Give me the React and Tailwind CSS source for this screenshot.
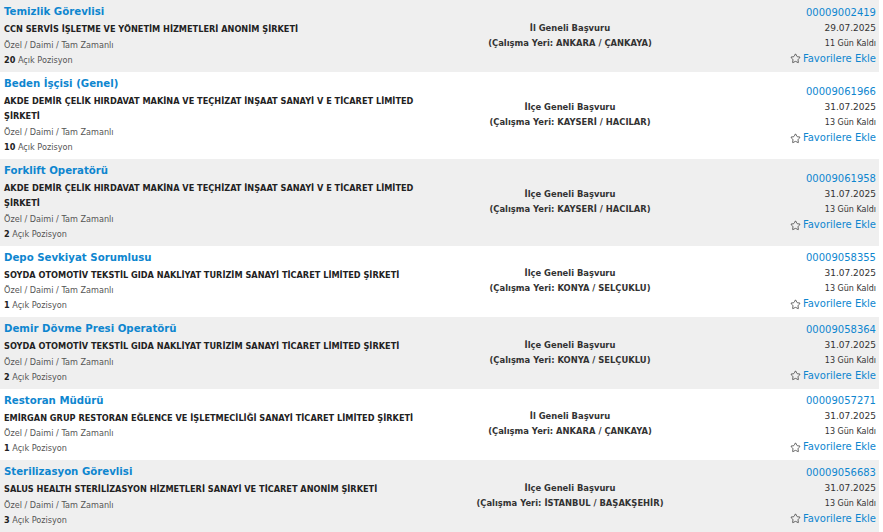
import { Star } from "lucide-react";

const jobs = [
  {
    title: "Temizlik Görevlisi",
    company: "CCN SERVİS İŞLETME VE YÖNETİM HİZMETLERİ ANONİM ŞİRKETİ",
    count: 20,
    scope: "İl Geneli Başvuru",
    place: "ANKARA / ÇANKAYA",
    no: "00009002419",
    date: "29.07.2025",
    left: "11 Gün Kaldı",
  },
  {
    title: "Beden İşçisi (Genel)",
    company: "AKDE DEMİR ÇELİK HIRDAVAT MAKİNA VE TEÇHİZAT İNŞAAT SANAYİ V E TİCARET LİMİTED ŞİRKETİ",
    count: 10,
    scope: "İlçe Geneli Başvuru",
    place: "KAYSERİ / HACILAR",
    no: "00009061966",
    date: "31.07.2025",
    left: "13 Gün Kaldı",
  },
  {
    title: "Forklift Operatörü",
    company: "AKDE DEMİR ÇELİK HIRDAVAT MAKİNA VE TEÇHİZAT İNŞAAT SANAYİ V E TİCARET LİMİTED ŞİRKETİ",
    count: 2,
    scope: "İlçe Geneli Başvuru",
    place: "KAYSERİ / HACILAR",
    no: "00009061958",
    date: "31.07.2025",
    left: "13 Gün Kaldı",
  },
  {
    title: "Depo Sevkiyat Sorumlusu",
    company: "SOYDA OTOMOTİV TEKSTİL GIDA NAKLİYAT TURİZİM SANAYİ TİCARET LİMİTED ŞİRKETİ",
    count: 1,
    scope: "İlçe Geneli Başvuru",
    place: "KONYA / SELÇUKLU",
    no: "00009058355",
    date: "31.07.2025",
    left: "13 Gün Kaldı",
  },
  {
    title: "Demir Dövme Presi Operatörü",
    company: "SOYDA OTOMOTİV TEKSTİL GIDA NAKLİYAT TURİZİM SANAYİ TİCARET LİMİTED ŞİRKETİ",
    count: 2,
    scope: "İlçe Geneli Başvuru",
    place: "KONYA / SELÇUKLU",
    no: "00009058364",
    date: "31.07.2025",
    left: "13 Gün Kaldı",
  },
  {
    title: "Restoran Müdürü",
    company: "EMİRGAN GRUP RESTORAN EĞLENCE VE İŞLETMECİLİĞİ SANAYİ TİCARET LİMİTED ŞİRKETİ",
    count: 1,
    scope: "İl Geneli Başvuru",
    place: "ANKARA / ÇANKAYA",
    no: "00009057271",
    date: "31.07.2025",
    left: "13 Gün Kaldı",
  },
  {
    title: "Sterilizasyon Görevlisi",
    company: "SALUS HEALTH STERİLİZASYON HİZMETLERİ SANAYİ VE TİCARET ANONİM ŞİRKETİ",
    count: 3,
    scope: "İlçe Geneli Başvuru",
    place: "İSTANBUL / BAŞAKŞEHİR",
    no: "00009056683",
    date: "31.07.2025",
    left: "13 Gün Kaldı",
  },
];

const JobRow = ({ job, gray }) => (
  <div
    className={`grid grid-cols-[458px_224px_1fr] ${gray ? "bg-[#efefef]" : "bg-white"}`}
  >
    {/* sol: ilan bilgisi */}
    <div className="pl-[4px] pt-[2px] pb-[4px]">
      <div className="text-[10.2px] font-bold leading-[20px] text-[#0e86cf]">{job.title}</div>
      <div className="w-[425px] text-[8.2px] font-bold leading-[15.5px] text-[#222]">{job.company}</div>
      <div className="text-[8.15px] leading-[15px] text-[#555]">Özel / Daimi / Tam Zamanlı</div>
      <div className="text-[8.15px] leading-[15px] text-[#555]">
        <span className="font-bold text-[#222]">{job.count}</span> Açık Pozisyon
      </div>
    </div>

    {/* orta: başvuru yeri */}
    <div className="flex flex-col items-center justify-center text-[8.4px] font-bold leading-[15px] text-[#333]">
      <div>{job.scope}</div>
      <div>(Çalışma Yeri: {job.place})</div>
    </div>

    {/* sağ: ilan no, tarih */}
    <div className="flex flex-col items-end justify-center pr-[3px] text-[#333]">
      <div className="text-[10px] leading-[16px] text-[#0e86cf]">{job.no}</div>
      <div className="text-[9px] leading-[15px]">{job.date}</div>
      <div className="text-[8px] leading-[15px]">{job.left}</div>
      <div className="flex items-center gap-[2px] text-[10px] leading-[16px] text-[#0e86cf]">
        <Star size={11} strokeWidth={1.6} className="text-[#333]" />
        <span>Favorilere Ekle</span>
      </div>
    </div>
  </div>
);

export default function App() {
  return (
    <div className="min-h-screen bg-white font-['DejaVu_Sans',sans-serif]">
      <div className="flex w-[879px] flex-col">
        {jobs.map((job, i) => (
          <JobRow key={job.no} job={job} gray={i % 2 === 0} />
        ))}
      </div>
    </div>
  );
}
